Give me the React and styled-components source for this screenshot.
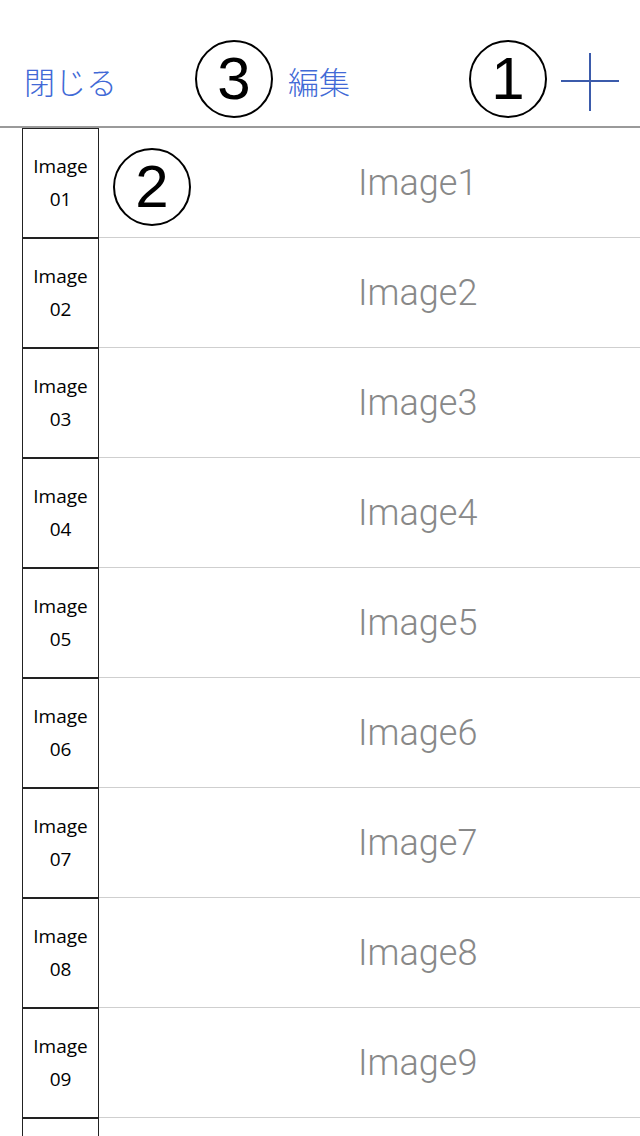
import React from 'react';
import styled, { createGlobalStyle } from 'styled-components';

const GlobalStyle = createGlobalStyle`
  html, body {
    margin: 0;
    padding: 0;
    background: #fff;
    overflow: hidden;
  }
  body {
    font-family: "Noto Sans CJK JP", "Noto Sans", sans-serif;
  }
`

const Screen = styled.div`
  width: 640px;
  height: 1136px;
  overflow: hidden;
  background: #fff;
`

const Header = styled.header`
  display: flex;
  align-items: center;
  box-sizing: border-box;
  height: 128px;
  padding: 32px 21px 0 24px;
  border-bottom: 2px solid #9a9a9a;
`

const NavButton = styled.span`
  font-family: "Noto Sans CJK JP", sans-serif;
  font-weight: 300;
  font-size: 31px;
  line-height: 1;
  color: #4169d6;
  margin-left: ${p => p.$gap || 0}px;
  margin-top: 2px;
`

// circled numbers are annotations drawn over the screenshot
const Marker = styled.span`
  display: flex;
  align-items: center;
  justify-content: center;
  box-sizing: border-box;
  width: 78px;
  height: 78px;
  border: 2px solid #000;
  border-radius: 50%;
  font-family: "Liberation Sans", Arial, sans-serif;
  font-size: 60px;
  line-height: 1;
  color: #000;
  margin-left: ${p => p.$gap || 0}px;
  margin-right: ${p => p.$after || 0}px;
`

const RowMarker = styled(Marker)`
  position: absolute;
  left: 113px;
  top: 20px;
  margin: 0;
  background: transparent;
`

const Spacer = styled.div`
  flex: 1;
`

const PlusIcon = () => (
  <svg width="58" height="58" viewBox="0 0 58 58" style={{ marginTop: 6 }}>
    <line x1="29" y1="0" x2="29" y2="58" stroke="#3b5bab" strokeWidth="2" />
    <line x1="0" y1="28" x2="58" y2="28" stroke="#3b5bab" strokeWidth="2" />
  </svg>
)

const List = styled.div`
  display: flex;
  flex-direction: column;
`

const Row = styled.div`
  position: relative;
  display: flex;
  height: 110px;
  flex-shrink: 0;
`

const Thumb = styled.div`
  box-sizing: border-box;
  width: 77px;
  height: 110px;
  margin-left: 22px;
  border: 1px solid #222;
  display: flex;
  flex-direction: column;
  align-items: center;
  justify-content: center;
  font-family: "Open Sans", sans-serif;
  font-size: 19px;
  line-height: 33px;
  color: #000;
`

const Title = styled.div`
  flex: 1;
  display: flex;
  align-items: center;
  box-sizing: border-box;
  padding-left: 259px;
  border-bottom: 1px solid #cfcfcf;
  font-family: Roboto, "Liberation Sans", sans-serif;
  font-weight: 300;
  font-size: 36px;
  color: #888;
`

const rows = [1, 2, 3, 4, 5, 6, 7, 8, 9]

export default function App() {
  return (
    <Screen>
      <GlobalStyle />
      <Header>
        <NavButton>閉じる</NavButton>
        <Marker $gap={78} $after={15}>3</Marker>
        <NavButton>編集</NavButton>
        <Spacer />
        <Marker $after={14}>1</Marker>
        <PlusIcon />
      </Header>
      <List>
        {rows.map(n => (
          <Row key={n}>
            <Thumb>
              <span>Image</span>
              <span>{String(n).padStart(2, '0')}</span>
            </Thumb>
            <Title>Image{n}</Title>
            {n === 1 && <RowMarker>2</RowMarker>}
          </Row>
        ))}
        {/* next row, scrolled past the bottom edge */}
        <Row>
          <Thumb />
          <Title />
        </Row>
      </List>
    </Screen>
  )
}
